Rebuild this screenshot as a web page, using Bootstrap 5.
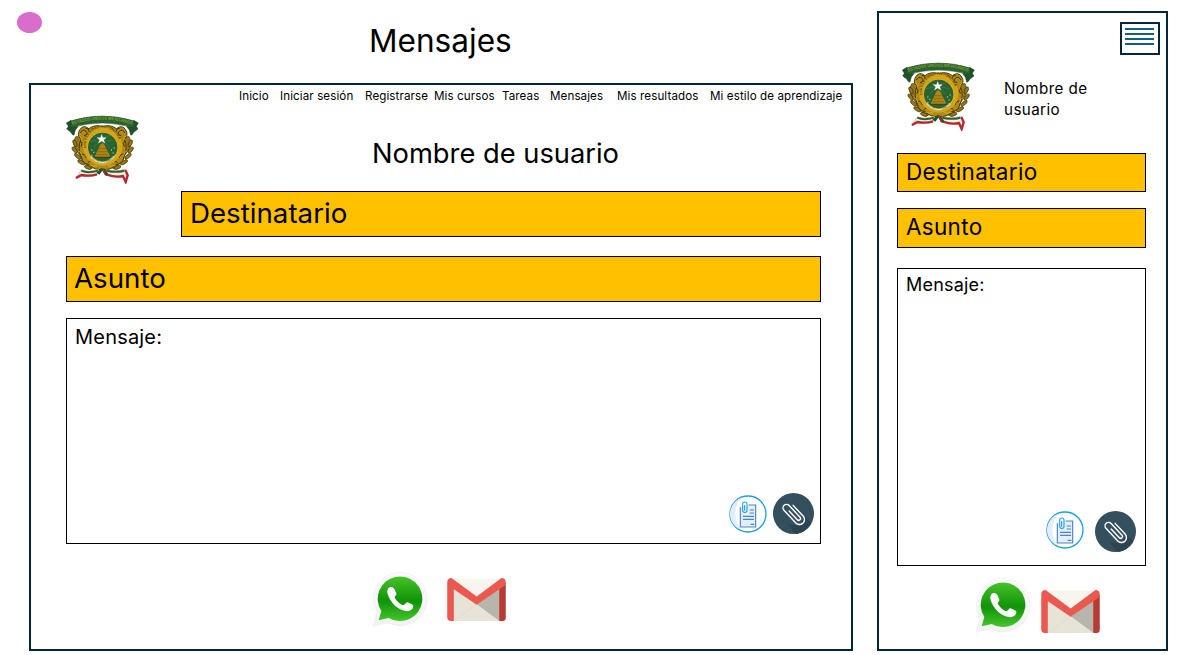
<!DOCTYPE html>
<html lang="es">
<head>
<meta charset="utf-8">
<title>Mensajes</title>
<link rel="stylesheet" href="https://cdn.jsdelivr.net/npm/bootstrap@5.3.0/dist/css/bootstrap.min.css">
<style>
  body { font-family: Inter, "Open Sans", sans-serif; color: #000; background: #fff; width: 1187px; height: 655px; overflow: hidden; }
  svg { display: block; flex: none; }
  .desktop-col { width: 853px; }
  .title-row { height: 83px; padding: 12px 0 0 17px; }
  .dot { width: 25px; height: 21px; background: #d86dcb; }
  .page-title { font-size: 31.6px; line-height: 40px; margin: 9px 0 0 327px; font-weight: 400; }
  .frame { border: 2px solid #04263a; }
  .frame-desktop { margin-left: 29px; width: 824px; height: 568px; }
  .frame-mobile { margin: 11px 0 0 24px; width: 291px; height: 640px; }
  .menu-bar { margin-left: 208px; height: 22px; font-size: 11.6px; line-height: 22px; letter-spacing: .1px; white-space: nowrap; }
  .menu-bar a { color: #000; text-decoration: none; flex: none; }
  .head-desktop { height: 84px; padding: 7px 0 0 34px; }
  .user-lg { font-size: 27.3px; line-height: 36px; margin: 22px 0 0 233px; white-space: nowrap; }
  .field { background: #ffc000; border: 1px solid #000; padding-left: 8px; white-space: nowrap; }
  .field-lg { font-size: 27.7px; height: 46px; line-height: 42px; }
  .field-sm { font-size: 22.5px; line-height: 36px; letter-spacing: .3px; }
  .fields-desktop { margin-left: 35px; width: 755px; }
  .to-lg { margin-left: 115px; margin-bottom: 19px; }
  .subject-lg { margin-bottom: 16px; padding-left: 7px; }
  .msg { border: 1px solid #000; padding-left: 8px; letter-spacing: .2px; }
  .msg-lg { height: 226px; font-size: 20px; line-height: 36px; padding-right: 6px; padding-bottom: 9px; }
  .share-desktop { margin: 27px 0 0 340.500px; }
  .burger { width: 40px; height: 33px; border: 2px solid #04263a; margin: 9px 0 6px 241px; padding: 4px 5px 0 3px; gap: 3px; }
  .burger span { height: 2px; width: 29px; background: #156082; }
  .head-mobile { height: 92px; padding-left: 22px; }
  .user-sm { font-size: 15.2px; line-height: 21px; letter-spacing: .4px; margin: 17px 0 0 29px; width: 110px; }
  .fields-mobile { margin-left: 18px; width: 249px; }
  .to-sm { height: 39px; margin-bottom: 16px; }
  .subject-sm { height: 40px; margin-bottom: 20px; }
  .msg-sm { height: 298px; font-size: 18px; line-height: 32px; padding-right: 10px; padding-bottom: 13px; }
  .share-mobile { margin: 10.500px 0 0 96px; }
</style>
</head>
<body class="d-flex align-items-start">

<svg width="0" height="0" class="position-absolute" aria-hidden="true">
  <defs>
    <linearGradient id="waGreen" x1="0" y1="0" x2="0" y2="1">
      <stop offset="0" stop-color="#45c329"/><stop offset=".48" stop-color="#18980d"/><stop offset=".55" stop-color="#109408"/><stop offset="1" stop-color="#46c62d"/>
    </linearGradient>
    <linearGradient id="waRim" x1="0" y1="0" x2="0" y2="1">
      <stop offset="0" stop-color="#fbfbfb"/><stop offset="1" stop-color="#f2f2f2"/>
    </linearGradient>
    <path id="bannerArc" d="M50 60Q142 28 235 60"/>
    <path id="ringArc" d="M94 128A50 50 0 1 1 192 128"/>
    <path id="mottoArc" d="M106 157Q142 192 178 157"/>

    <symbol id="crest" viewBox="30 27 222 210">
      <g fill="#967719" stroke="#3b3008" stroke-width="2">
        <path d="M62 95q-12 22 2 40t18 34l26 22 16-7-38-39-10-50zM222 95q12 22-2 40t-18 34l-26 22-16-7 38-39 10-50z"/>
        <ellipse cx="60" cy="115" rx="5" ry="11" transform="rotate(-25 60 115)"/><ellipse cx="59" cy="135" rx="5" ry="11" transform="rotate(-40 59 135)"/>
        <ellipse cx="68" cy="154" rx="5" ry="12" transform="rotate(-48 68 154)"/><ellipse cx="79" cy="172" rx="5" ry="12" transform="rotate(-60 79 172)"/>
        <ellipse cx="226" cy="115" rx="5" ry="11" transform="rotate(25 226 115)"/><ellipse cx="227" cy="135" rx="5" ry="11" transform="rotate(40 227 135)"/>
        <ellipse cx="219" cy="154" rx="5" ry="12" transform="rotate(48 219 154)"/><ellipse cx="207" cy="172" rx="5" ry="12" transform="rotate(60 207 172)"/>
        <ellipse cx="99" cy="187" rx="5" ry="11" transform="rotate(-70 99 187)"/><ellipse cx="187" cy="187" rx="5" ry="11" transform="rotate(70 187 187)"/>
      </g>
      <path d="M74 75q10-18 28-4 15-13 41-7 26-6 41 7 18-14 28 4 10 15-4 27 12 28-2 56-2 18-24 21-14 18-39 14-25 4-39-14-22-3-24-21-14-28-2-56-14-12-4-27z" fill="#b08a15" stroke="#4a3b0a" stroke-width="3"/>
      <g fill="none" stroke="#3f3209" stroke-width="3">
        <path d="M76 84q8-14 17-5t-6 13M210 84q-8-14-17-5t6 13M92 70q10-1 10 9M194 70q-10-1-10 9M76 108q9 7 2 17M210 108q-9 7-2 17M78 148q12-3 16 11M208 148q-12-3-16 11M98 174q9-11 20-3M188 174q-9-11-20-3M112 70l10 8M174 70l-10 8"/>
      </g>
      <g fill="none" stroke="#dfb633" stroke-width="2.5"><path d="M72 92q8 3 7 13M214 92q-8 3-7 13M70 137q8 3 11 15M216 137q-8 3-11 15M104 180q12 6 22 2M182 180q-12 6-22 2"/></g>
      <ellipse cx="143" cy="124" rx="59" ry="58" fill="#d5a517"/>
      <text font-size="11" font-weight="700" fill="#65500f" letter-spacing=".4"><textPath href="#ringArc">UNIVERSIDAD AUTONOMA</textPath></text>
      <circle cx="143" cy="127" r="47" fill="#d6ad31"/>
      <circle cx="143" cy="127" r="44" fill="#286330"/>
      <g stroke="#6f9f75" stroke-width="1"><path d="M140 102l-30-13M140 102l-35 8M140 102l-25 25M140 102l30-13M140 102l35 8M140 102l25 25M140 102v-18"/></g>
      <path d="M140 89l3.500 9h10l-8 6 4 10-9.500-6-9.500 6 4-10-8-6h10z" fill="#fff" stroke="#fff"/>
      <path d="M142 115q8 2 10 13l12 22q2 6-3 8h-38q-5-2-2-8l11-22q3-12 10-13z" fill="#ad8512"/>
      <path d="M132 131h20M128 140h29M124 149h35" stroke="#7d6112" stroke-width="2"/>
      <path d="M119 157h47" stroke="#3d3510" stroke-width="3"/>
      <path d="M109 135h3m3 7h3m-9 9h3m56-16h3m5-6h3m-6 15h3m3 7h3" stroke="#e4eddf" stroke-width="3"/>
      <text font-size="7" fill="#fff" font-weight="700"><textPath href="#mottoArc">PATRIA CIENCIA Y TRABAJO</textPath></text>
      <path d="M48 46l-14 8 6 10-5 8 12 9q6 12 10 9l4-15 8-10-21-3zM236 46l14 8-6 10 5 8-12 9q-6 12-10 9l-4-15-8-10 21-3z" fill="#1d5429" stroke="#173c21" stroke-width="1.500"/>
      <path d="M46 48Q142 18 238 48L234 68Q142 40 50 68z" fill="#286332" stroke="#1b4824" stroke-width="1.500"/>
      <text font-size="13.500" font-weight="700" fill="#829d2d"><textPath href="#bannerArc" startOffset="2" textLength="182" lengthAdjust="spacingAndGlyphs">ESTADOS UNIDOS MEXICANOS</textPath></text>
      <g stroke="#8c8468" stroke-width="1.200">
        <path d="M62 221l17-27q19 9 51-1l-4 17q-22 9-44 3z" fill="#f8f1df"/>
        <path d="M152 194q30 8 59-1l9 17-8 23-8-17q-28 4-47-7z" fill="#f8f1df"/>
      </g>
      <path d="M79 197q20 9 50 0M154 197q30 7 54 0" stroke="#286332" stroke-width="6" fill="none"/>
      <path d="M63 219l16-9q25 5 47-2" stroke="#b92631" stroke-width="7" fill="none"/>
      <path d="M156 209q25 9 48 4l8 18 6-20-7-16" stroke="#b92631" stroke-width="7" fill="none"/>
      <path d="M138 190l-14 13 9 6 9-12 11 17 7-6-11-17z" fill="#23502a"/>
      <path d="M144 193l7 16" stroke="#bb2731" stroke-width="5"/>
    </symbol>

    <symbol id="doc" viewBox="26 29 114 114">
      <circle cx="83" cy="86" r="54" fill="#fff" stroke="#1a9eec" stroke-width="4"/>
      <path d="M70 36A51 51 0 0 0 70 136Q45 122 45 86T70 36" fill="#e3edfb"/>
      <path d="M85 59h21v66H60V66" fill="#e4eefc" stroke="#4e86bb" stroke-width="3.500"/>
      <path d="M88 74h13M88 83h13M68 93h33M68 102h33M91 117h11" stroke="#4e86bb" stroke-width="3.500"/>
      <path d="M73 60v15M80 75V56q0-6-6.500-6T67 56v19q0 6.500 6.500 6.500T80 75z" fill="none" stroke="#1a9eec" stroke-width="3.200" stroke-linecap="round"/>
    </symbol>

    <symbol id="clip" viewBox="159 23 123 123">
      <clipPath id="clipDisc"><circle cx="220.500" cy="84.500" r="61.500"/></clipPath>
      <circle cx="220.500" cy="84.500" r="61.500" fill="#344f5d"/>
      <path clip-path="url(#clipDisc)" d="M253 93l40 40-40 40-52-56 40 5z" fill="#2c4350"/>
      <path transform="translate(222 85) rotate(-43)" d="M15 -20V24a15 15 0 0 1-30 0V-28a10.500 10.500 0 0 1 21 0V20a5.500 5.500 0 0 1-11 0V-16" fill="none" stroke="#fff" stroke-width="4.300" stroke-linecap="round"/>
    </symbol>

    <symbol id="whatsapp" viewBox="20 18 168 168">
      <path d="M23 184l12-43A80 80 0 1 1 68 173z" fill="url(#waRim)" stroke="#e8e8e8" stroke-width="1.500"/>
      <path d="M40 166l8-28A67 67 0 1 1 70 159z" fill="url(#waGreen)"/>
      <path d="M76 66c-9 0-12 12-9 21 8 26 29 47 54 51 12 2 22-4 23-14 0-5-5-6-17-12-5-2-8 8-13 9-8-1-24-16-26-24 0-4 7-7 5-12-5-12-7-19-17-19z" fill="#fff"/>
    </symbol>

    <symbol id="gmail" viewBox="246 38 177 130">
      <path d="M258 40h152v126H258z" fill="#f7f5ed"/>
      <path d="M266 70l69 48-69 50z" fill="#e7e3d7"/>
      <path d="M403 70l-68 48 68 50z" fill="#b6b6ad"/>
      <path d="M266 168l69-50 68 50z" fill="#e7e3d7"/>
      <path d="M266 168l69-50" stroke="#d5d2c8" stroke-width="1.500"/>
      <path d="M403 68l20-16v106q0 10-10 10h-10z" fill="#b63b34"/>
      <path d="M246 52q0-14 13-14l76 56 75-56q13 0 13 14 0 7-6 11l-82 56-69-47v96h-9q-11 0-11-11z" fill="#e95950"/>
    </symbol>
  </defs>
</svg>

<section class="desktop-col flex-shrink-0">
  <header class="title-row d-flex align-items-start">
    <span class="dot rounded-circle"></span>
    <h1 class="page-title">Mensajes</h1>
  </header>
  <main class="frame frame-desktop">
    <nav class="menu-bar d-flex">
      <a href="#" style="width:41px">Inicio</a>
      <a href="#" style="width:85px">Iniciar sesión</a>
      <a href="#" style="width:69px">Registrarse</a>
      <a href="#" style="width:68px">Mis cursos</a>
      <a href="#" style="width:48px">Tareas</a>
      <a href="#" style="width:67px">Mensajes</a>
      <a href="#" style="width:93px">Mis resultados</a>
      <a href="#" style="width:133px">Mi estilo de aprendizaje</a>
    </nav>
    <div class="head-desktop d-flex align-items-start">
      <svg width="74" height="70"><use href="#crest"/></svg>
      <div class="user-lg"><span>Nombre de usuario</span></div>
    </div>
    <div class="fields-desktop">
      <div class="field field-lg to-lg"><span>Destinatario</span></div>
      <div class="field field-lg subject-lg"><span>Asunto</span></div>
      <div class="msg msg-lg d-flex flex-column justify-content-between">
        <span>Mensaje:</span>
        <div class="d-flex justify-content-end" style="gap:6.500px">
          <svg width="38" height="38" style="margin-top:1.500px"><use href="#doc"/></svg>
          <svg width="41" height="41"><use href="#clip"/></svg>
        </div>
      </div>
    </div>
    <div class="share-desktop d-flex align-items-start">
      <svg width="56" height="56"><use href="#whatsapp"/></svg>
      <svg width="59" height="43" style="margin:7px 0 0 19.500px"><use href="#gmail"/></svg>
    </div>
  </main>
</section>

<aside class="frame frame-mobile flex-shrink-0">
  <div class="burger d-flex flex-column"><span></span><span></span><span></span><span></span></div>
  <div class="head-mobile d-flex align-items-start">
    <svg width="74" height="70"><use href="#crest"/></svg>
    <div class="user-sm"><span>Nombre de<br>usuario</span></div>
  </div>
  <div class="fields-mobile">
    <div class="field field-sm to-sm"><span>Destinatario</span></div>
    <div class="field field-sm subject-sm"><span>Asunto</span></div>
    <div class="msg msg-sm d-flex flex-column justify-content-between">
      <span>Mensaje:</span>
      <div class="d-flex justify-content-end" style="gap:11px;margin-right:-.6px">
        <svg width="38" height="38" style="margin-top:-.5px"><use href="#doc"/></svg>
        <svg width="41" height="41"><use href="#clip"/></svg>
      </div>
    </div>
  </div>
  <div class="share-mobile d-flex align-items-start">
    <svg width="56" height="56"><use href="#whatsapp"/></svg>
    <svg width="59" height="43" style="margin:13px 0 0 10px"><use href="#gmail"/></svg>
  </div>
</aside>

<script src="https://cdn.jsdelivr.net/npm/bootstrap@5.3.0/dist/js/bootstrap.bundle.min.js"></script>
</body>
</html>
